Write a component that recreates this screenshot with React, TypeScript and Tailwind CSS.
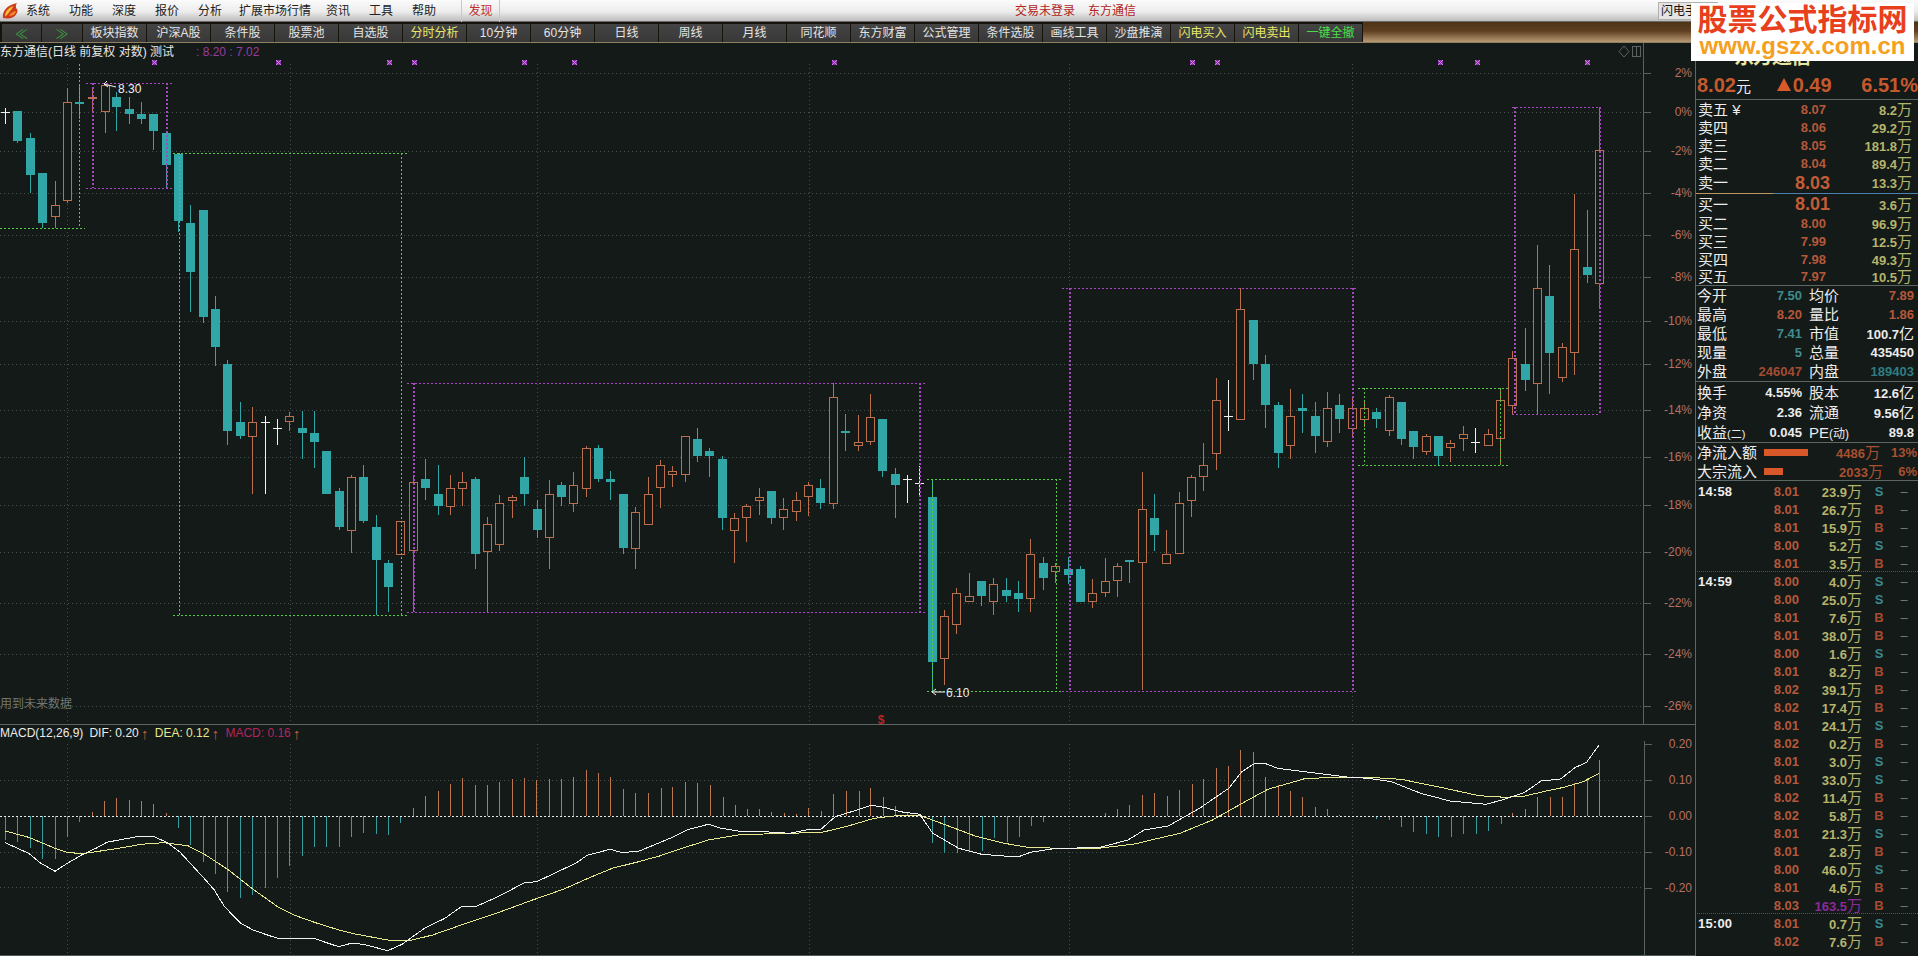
import React from 'react';

type Kind = 'u' | 'd' | 'w';
const candles: [number, number, number, number, number, Kind][] = [
  [5,108,112,112,124,'w'],[17,111,111,141,143,'d'],[30,133,138,175,193,'d'],[42,173,173,223,228,'d'],[55,181,205,217,228,'u'],
  [67,88,102,201,203,'u'],[79,85,102,104,119,'d'],[92,88,97,99,112,'u'],[105,85,85,112,133,'u'],[116,92,97,107,131,'d'],
  [129,97,109,114,124,'d'],[141,102,114,119,124,'d'],[153,114,114,131,150,'d'],[166,133,133,165,188,'d'],[178,154,154,221,232,'d'],
  [190,205,223,272,312,'d'],[203,210,210,317,323,'d'],[215,296,309,347,366,'d'],[227,360,364,431,445,'d'],[240,402,422,436,439,'d'],
  [252,407,422,437,494,'u'],[265,416,422,422,494,'w'],[277,419,428,428,445,'w'],[289,412,416,422,431,'u'],[302,411,428,433,459,'d'],
  [314,411,433,442,468,'d'],[326,451,451,494,494,'d'],[339,488,491,527,530,'d'],[351,475,477,531,553,'u'],[363,465,477,521,523,'d'],
  [376,515,527,560,615,'d'],[388,560,563,587,612,'d'],[400,521,521,555,555,'u'],[413,475,482,551,612,'u'],[425,459,479,488,500,'d'],
  [438,465,494,506,515,'d'],[450,475,488,507,515,'u'],[462,472,482,489,506,'u'],[475,477,479,554,569,'d'],[487,517,524,552,612,'u'],
  [499,495,503,545,551,'u'],[512,495,497,501,518,'u'],[524,457,477,494,506,'d'],[537,500,509,530,538,'d'],[549,480,494,538,569,'u'],
  [561,482,485,497,506,'d'],[573,472,485,504,512,'u'],[586,446,448,489,497,'u'],[598,445,448,479,482,'d'],[610,471,479,482,500,'d'],
  [623,494,494,548,554,'d'],[635,507,512,549,569,'u'],[648,477,494,525,525,'u'],[660,460,465,488,508,'u'],[672,466,471,475,487,'u'],
  [685,436,436,475,482,'u'],[697,428,439,456,462,'d'],[709,448,451,456,477,'d'],[722,456,459,518,530,'d'],[734,513,518,531,563,'u'],
  [746,504,506,518,542,'u'],[759,488,497,501,515,'u'],[771,491,491,518,524,'d'],[783,498,509,518,530,'u'],[796,492,500,512,521,'u'],
  [808,482,485,497,516,'u'],[820,479,488,503,509,'d'],[833,383,397,504,509,'u'],[845,414,431,433,451,'d'],[858,415,442,446,451,'u'],
  [870,394,417,442,445,'u'],[882,419,419,471,477,'d'],[895,468,474,485,518,'d'],[907,475,479,479,503,'w'],[919,466,483,483,497,'w'],
  [932,479,497,662,692,'d'],[944,610,616,659,685,'u'],[956,588,593,625,634,'u'],[969,573,596,602,602,'u'],[981,581,581,596,606,'d'],
  [993,578,584,602,615,'u'],[1006,578,590,596,602,'d'],[1018,581,593,599,612,'d'],[1030,539,554,599,612,'u'],[1043,557,563,578,590,'d'],
  [1055,563,566,572,583,'u'],[1068,557,569,575,584,'d'],[1080,566,569,602,602,'d'],[1092,579,593,602,608,'u'],[1105,558,581,593,597,'u'],
  [1117,563,566,581,597,'u'],[1129,560,560,562,583,'d'],[1142,472,509,563,690,'u'],[1154,494,518,535,551,'d'],[1166,530,554,564,564,'u'],
  [1179,492,503,554,554,'u'],[1191,475,477,501,517,'u'],[1203,443,465,477,491,'u'],[1216,378,400,454,470,'u'],[1228,380,416,416,431,'w'],
  [1240,288,309,420,420,'u'],[1253,320,320,364,380,'d'],[1265,355,364,405,428,'d'],[1278,402,405,453,468,'d'],[1290,389,416,446,459,'u'],
  [1302,394,408,411,433,'d'],[1315,402,416,436,453,'d'],[1327,392,408,442,447,'u'],[1339,394,405,419,433,'d'],[1352,398,408,429,437,'u'],
  [1364,400,408,420,427,'u'],[1376,408,412,419,428,'d'],[1389,395,397,431,436,'u'],[1401,402,402,439,445,'d'],[1413,431,431,447,459,'d'],
  [1426,434,436,452,455,'u'],[1438,436,436,456,465,'d'],[1450,440,443,448,462,'u'],[1463,426,434,439,451,'u'],[1475,428,442,442,453,'w'],
  [1488,429,434,446,446,'u'],[1500,389,400,439,465,'u'],[1512,351,358,406,414,'u'],[1525,328,364,380,391,'d'],[1537,245,288,384,414,'u'],
  [1549,265,296,353,394,'d'],[1562,343,347,378,382,'u'],[1574,194,249,353,375,'u'],[1587,210,267,275,283,'d'],[1599,107,150,284,309,'u'],
];

const green = '#58c848';
const purple = '#a848c0';
const boxes: [string, number, number, number, number, number, number][] = [
  [purple,92,166,83,188,86,172],[green,179,401,153,615,173,407],[purple,413,919,383,612,407,927],
  [green,932,1056,479,691,927,1062],[purple,1069,1352,288,691,1062,1358],[green,1364,1500,388,465,1358,1508],[purple,1514,1599,107,414,1512,1600],
];

const pctLabels: [string, number][] = [['2%',73],['0%',112],['-2%',151],['-4%',193],['-6%',235],['-8%',277],['-10%',321],['-12%',364],['-14%',410],['-16%',457],['-18%',505],['-20%',552],['-22%',603],['-24%',654],['-26%',706]];
const vGrid = [67,290,537,809,1069,1352];
const marks = [154,278,389,414,524,574,834,1192,1217,1440,1477,1587];

const hist: [number, number][] = [
  [5,840],[17,842],[30,848],[42,859],[55,859],[67,837],[79,822],[92,812],[104,801],[116,798],[129,800],[141,801],[153,804],[166,813],
  [178,828],[190,845],[203,862],[215,874],[227,892],[240,898],[252,895],[265,888],[277,878],[289,866],[302,856],[314,847],[326,847],[339,847],[351,837],[363,833],[376,834],[388,835],[400,823],
  [413,808],[425,796],[438,791],[450,784],[462,778],[475,785],[487,785],[499,782],[512,779],[524,778],[536,780],[549,779],[561,779],[573,777],[586,770],[598,773],[610,777],[623,789],[635,793],
  [648,793],[661,788],[672,787],[685,782],[697,783],[710,785],[723,797],[735,805],[747,809],[759,809],[771,812],[784,813],[796,814],[808,808],[821,811],[833,794],[846,791],[859,791],[870,788],[883,797],[895,806],[907,812],
  [932,843],[944,853],[957,853],[969,852],[982,851],[994,838],[1007,842],[1019,837],[1031,826],[1043,822],
  [1105,813],[1117,809],[1129,805],[1142,795],[1154,793],[1167,796],[1179,790],[1192,784],[1203,779],[1216,768],[1228,766],[1240,750],[1253,752],[1265,777],[1278,785],[1290,791],[1302,797],[1315,807],[1327,809],[1339,815],
  [1376,819],[1389,820],[1401,827],[1413,832],[1426,834],[1438,837],[1451,837],[1463,834],[1476,834],[1488,831],[1501,824],
  [1512,813],[1525,809],[1537,797],[1550,797],[1562,797],[1574,783],[1587,778],[1599,760],
];

const whiteA = [[13,488],[70,520],[100,550],[135,574],[165,550],[200,525],[235,505],[262,487],[300,478],[345,468],[380,471],[410,488],[440,515],[470,555],[500,595],[525,630],[550,680],[590,730],[620,750],[650,763],[680,775],[725,775],[770,775],[800,788],[830,800],[860,790],[890,793],[950,812],[985,793],[1040,745],[1090,715],[1130,680],[1165,680],[1220,650],[1285,608],[1315,605],[1410,550],[1440,525],[1495,508],[1525,518],[1565,513]];
const yellowA = [[13,453],[70,472],[105,490],[135,505],[165,517],[200,521],[235,515],[300,503],[345,493],[400,488],[460,497],[500,522],[560,570],[620,628],[680,680],[720,705],[770,727],[830,750],[870,762],[950,780],[1000,783],[1060,765],[1130,735],[1220,698],[1300,662],[1380,628],[1450,590],[1500,565],[1565,545]];
const whiteB = [[0,452],[30,428],[50,412],[75,388],[105,373],[125,385],[150,393],[190,395],[230,400],[260,388],[278,388],[300,350],[325,335],[355,316],[375,322],[400,335],[430,343],[450,400],[490,445],[525,463],[560,468],[585,468],[600,457],[640,445],[705,443],[750,420],[775,390],[812,378],[860,325],[905,265],[925,215],[945,190],[960,190],[980,205],[1010,212],[1050,222],[1090,232],[1120,235],[1155,245],[1200,280],[1245,303],[1300,313],[1325,300],[1360,277],[1385,243],[1415,237],[1437,203],[1455,187],[1474,135]];
const yellowB = [[0,484],[30,468],[60,448],[105,420],[150,405],[190,402],[230,400],[280,397],[320,378],[360,355],[400,346],[430,346],[470,375],[515,408],[560,430],[600,443],[660,445],[705,445],[760,432],[790,418],[830,400],[880,360],[930,305],[965,268],[1020,237],[1060,232],[1120,232],[1170,238],[1230,262],[1290,287],[1330,292],[1360,288],[1395,272],[1420,262],[1450,245],[1474,220]];
const toLine = (a: number[][], b: number[][]) =>
  [...a.map(([x, y]) => `${(x / 2.45).toFixed(1)},${(680 + y / 3).toFixed(1)}`), ...b.map(([x, y]) => `${(640 + x / 1.537).toFixed(1)},${(700 + y / 3).toFixed(1)}`)].join(' ');

const menus: [string, string][] = [['系统','w-[43px]'],['功能','w-[43px]'],['深度','w-[43px]'],['报价','w-[43px]'],['分析','w-[41px]'],['扩展市场行情','w-[87px]'],['资讯','w-[43px]'],['工具','w-[43px]'],['帮助','w-[49px]']];
const tools: [string, string][] = [['板块指数','text-[#e4e4e4]'],['沪深A股','text-[#e4e4e4]'],['条件股','text-[#e4e4e4]'],['股票池','text-[#e4e4e4]'],['自选股','text-[#e4e4e4]'],['分时分析','text-[#e8e868]'],['10分钟','text-[#e4e4e4]'],['60分钟','text-[#e4e4e4]'],['日线','text-[#e4e4e4]'],['周线','text-[#e4e4e4]'],['月线','text-[#e4e4e4]'],['同花顺','text-[#e4e4e4]'],['东方财富','text-[#e4e4e4]'],['公式管理','text-[#e4e4e4]'],['条件选股','text-[#e4e4e4]'],['画线工具','text-[#e4e4e4]'],['沙盘推演','text-[#e4e4e4]'],['闪电买入','text-[#e8e868]'],['闪电卖出','text-[#e8e868]'],['一键全撤','text-[#48e048]']];

const red = 'text-[#b4583a]';
const teal = 'text-[#3e8c8e]';
const qty = 'text-[#b4b46c]';

function Book({ label, price, vol, big, h }: { label: React.ReactNode; price: string; vol: string; big?: boolean; h: string }) {
  return (
    <div className={`grid grid-cols-[60px_68px_86px] items-center pl-[2px] ${h}`}>
      <span className="text-[15px] leading-none text-[#ececec] whitespace-nowrap">{label}</span>
      {big ? (
        <span className="justify-self-end -mr-[4px] text-[18px] font-bold text-[#c05c36] leading-none">{price}</span>
      ) : (
        <span className={`justify-self-end text-[13px] leading-none font-bold ${red}`}>{price}</span>
      )}
      <span className={`justify-self-end text-[13px] leading-none font-bold ${qty}`}>
        {vol}
        <span className="text-[15px] font-normal">万</span>
      </span>
    </div>
  );
}

function Val({ v, unit, color = 'text-[#ececec]' }: { v: string; unit?: string; color?: string }) {
  return (
    <span className={`w-[72px] text-right text-[13px] leading-none font-bold whitespace-nowrap ${color}`}>
      {v}
      {unit && <span className="text-[15px] font-normal">{unit}</span>}
    </span>
  );
}

function Stat({ a, av, b, bv, h }: { a: React.ReactNode; av: React.ReactNode; b: React.ReactNode; bv: React.ReactNode; h: string }) {
  return (
    <div className={`flex items-center pl-[1px] ${h}`}>
      <span className="w-[33px] text-[15px] leading-none text-[#ececec] whitespace-nowrap">{a}</span>
      {av}
      <span className="w-[33px] ml-[7px] text-[15px] leading-none text-[#ececec] whitespace-nowrap">{b}</span>
      {bv}
    </div>
  );
}

const ticks: [string, string, string, 'S' | 'B'][] = [
  ['14:58','8.01','23.9','S'],['','8.01','26.7','B'],['','8.01','15.9','B'],['','8.00','5.2','S'],['','8.01','3.5','B'],
  ['14:59','8.00','4.0','S'],['','8.00','25.0','S'],['','8.01','7.6','B'],['','8.01','38.0','B'],['','8.00','1.6','S'],
  ['','8.01','8.2','B'],['','8.02','39.1','B'],['','8.02','17.4','B'],['','8.01','24.1','S'],['','8.02','0.2','B'],
  ['','8.01','3.0','S'],['','8.01','33.0','S'],['','8.02','11.4','B'],['','8.02','5.8','B'],['','8.01','21.3','S'],
  ['','8.01','2.8','B'],['','8.00','46.0','S'],['','8.01','4.6','B'],['','8.03','163.5','B'],['15:00','8.01','0.7','S'],
  ['','8.02','7.6','B'],
];

const Up = () => <span className="inline-block w-[12px] mr-[4px] text-center text-[15px] leading-none text-[#c8643c]">↑</span>;

export default function App() {
  return (
    <div className="relative w-[1918px] h-[956px] overflow-hidden flex flex-col bg-[#141a18] font-['Liberation_Sans','Noto_Sans_CJK_SC',sans-serif] text-[12px]">
      {/* menu bar */}
      <div className="h-[22px] flex items-center bg-[linear-gradient(to_bottom,#fbfbfb,#ececec_55%,#bdbdbd)] border-b border-[#6a6a6a] text-[#222]">
        <svg width="16" height="16" viewBox="0 0 16 16" className="ml-[2px] mr-[8px] shrink-0">
          <path d="M1 15 C0 8 5 2 15 0 C13 3 14 5 15.500 7 C15.500 12 11 16 5 15.500 C3.500 15.500 2 15.300 1 15Z" fill="#cf3a1a" />
          <path d="M3 13.500 C3 9 6 5 11.500 3 C10 6 9 7 7 9.500 C6 11 4.500 12.500 3 13.500Z" fill="#f6bc3c" />
          <path d="M7 12.500 C9 10 11 8.500 14 8 C13.500 11 11 13.500 7 12.500Z" fill="#f08a2c" />
        </svg>
        {menus.map(([m, w]) => (
          <span key={m} className={`${w} shrink-0 whitespace-nowrap`}>{m}</span>
        ))}
        <span className="w-[39px] h-[22px] shrink-0 flex items-center justify-center border-x border-[#c8c8c8] text-[#c03030]">发现</span>
        <span className="ml-[515px] w-[73px] shrink-0 whitespace-nowrap text-[#b02424]">交易未登录</span>
        <span className="w-[60px] shrink-0 whitespace-nowrap text-[#b02424]">东方通信</span>
        <span className="ml-[510px] w-[60px] h-[18px] shrink-0 flex items-center pl-[2px] bg-[#e4e4e4] border border-[#b0b0b0] whitespace-nowrap text-[#111]">闪电手</span>
      </div>

      {/* toolbar */}
      <div className="h-[21px] flex bg-[#16120c] border-b border-[#8f8060]">
        <div className="flex pt-[2px] pl-[2px] shrink-0">
          <span className="w-[39px] h-[18px] mr-px flex items-center justify-center bg-[linear-gradient(to_bottom,#404040,#353535)] text-[#3f9f3f] text-[13px] leading-none">≪</span>
          <span className="w-[40px] h-[18px] mr-px flex items-center justify-center bg-[linear-gradient(to_bottom,#404040,#353535)] text-[#3f9f3f] text-[13px] leading-none">≫</span>
          {tools.map(([t, c]) => (
            <span key={t} className={`w-[63px] h-[18px] mr-px flex items-center justify-center whitespace-nowrap bg-[linear-gradient(to_bottom,#444444,#383838)] ${c}`}>{t}</span>
          ))}
        </div>
        <div className="flex-1 bg-[linear-gradient(to_bottom,#4e3317,#5e3f20_45%,#b99a74)]" />
      </div>

      {/* body */}
      <div className="flex-1 flex min-h-0">
        <div className="w-[1695px] shrink-0 flex flex-col">
          <div className="h-[16px] w-[1644px] flex border-r border-[#5a625f]">
            <span className="text-[#e8e8e8] leading-[19px] whitespace-nowrap">东方通信(日线 前复权 对数) 测试</span>
            <span className="ml-[22px] text-[#9a3ca0] leading-[19px] whitespace-nowrap">: 8.20 : 7.02</span>
            <svg width="24" height="14" viewBox="0 0 24 14" className="ml-auto mr-[1px] mt-[2px]">
              <path d="M6 1 L11 6.500 L6 12 L1 6.500 Z" fill="none" stroke="#5c6461" />
              <rect x="14.500" y="1.500" width="8" height="10" fill="none" stroke="#5c6461" />
              <line x1="18.500" y1="1.500" x2="18.500" y2="11.500" stroke="#5c6461" />
            </svg>
          </div>

          <svg width="1695" height="665" viewBox="0 59 1695 665" className="block shrink-0" shapeRendering="crispEdges">
            {pctLabels.map(([l, y]) => (
              <g key={l}>
                <line x1="0" x2="1643" y1={y + 0.5} y2={y + 0.5} stroke="#474f4c" strokeDasharray="1 3" />
                <line x1="1644" x2="1651" y1={y + 0.5} y2={y + 0.5} stroke="#5a625f" />
                <text x="1692" y={y + 4} textAnchor="end" fontSize="12" fill="#b87062" shapeRendering="auto">{l}</text>
              </g>
            ))}
            {vGrid.map((x) => (
              <line key={x} x1={x + 0.5} x2={x + 0.5} y1="64" y2="724" stroke="#474f4c" strokeDasharray="1 3" />
            ))}
            <line x1="1643.500" x2="1643.500" y1="59" y2="724" stroke="#5a625f" />
            {marks.map((x) => (
              <g key={x}>
                <rect x={x - 2} y="60" width="5" height="5" fill="#8a2ea8" />
                <path d={`M${x - 2} 60 l5 5 M${x + 3} 60 l-5 5`} stroke="#d080e0" strokeWidth="1" fill="none" />
              </g>
            ))}
            {candles.map(([x, hi, top, bot, lo, k], i) => {
              const px = x + 0.5;
              if (k === 'w')
                return (
                  <g key={i} stroke="#f2f2f2">
                    <line x1={px} x2={px} y1={hi} y2={lo} />
                    <line x1={x - 4} x2={x + 5} y1={top + 0.5} y2={top + 0.5} />
                  </g>
                );
              const c = k === 'u' ? '#bc6f4c' : '#30a6a6';
              return (
                <g key={i} stroke={c}>
                  <line x1={px} x2={px} y1={hi} y2={top} />
                  <line x1={px} x2={px} y1={bot} y2={lo} />
                  {k === 'u' ? (
                    <rect x={x - 4 + 0.5} y={top + 0.5} width="8" height={Math.max(bot - top - 1, 1)} fill="#141a18" />
                  ) : (
                    <rect x={x - 4} y={top} width="9" height={Math.max(bot - top, 2)} fill={c} stroke="none" />
                  )}
                </g>
              );
            })}
            <g fill="none" strokeDasharray="2 2">
              <line x1="0" x2="85" y1="228.500" y2="228.500" stroke={green} />
              <line x1="79.500" x2="79.500" y1="64" y2="228" stroke={green} />
              {boxes.map(([c, x1, x2, y1, y2, h1, h2], i) => (
                <g key={i} stroke={c}>
                  <line x1={h1} x2={h2} y1={y1 + 0.5} y2={y1 + 0.5} />
                  <line x1={h1} x2={h2} y1={y2 + 0.5} y2={y2 + 0.5} />
                  <line x1={x1 + 0.5} x2={x1 + 0.5} y1={y1} y2={y2} strokeWidth={c === purple ? 2 : 1} />
                  <line x1={x2 + 0.5} x2={x2 + 0.5} y1={y1} y2={y2} strokeWidth={c === purple ? 2 : 1} />
                </g>
              ))}
            </g>
            <g shapeRendering="auto">
              <path d="M108 87 L104 84 L107 81 M104 84 L116 87" fill="none" stroke="#f0f0f0" />
              <text x="118" y="93" fontSize="12" fill="#f0f0f0">8.30</text>
              <path d="M936 689 L932 692 L936 695 M932 692 L945 692" fill="none" stroke="#f0f0f0" />
              <text x="946" y="697" fontSize="12" fill="#e8e8e8">6.10</text>
              <text x="0" y="708" fontSize="12" fill="#6f7673">用到未来数据</text>
              <text x="881" y="724" textAnchor="middle" fontSize="12" fontWeight="bold" fill="#c02020">$</text>
            </g>
          </svg>

          <div className="h-[17px] shrink-0 border-t border-[#5c6663] flex items-center whitespace-nowrap text-[12px]">
            <span className="text-[#ececec] mr-[6px]">MACD(12,26,9)</span>
            <span className="text-[#ececec]">DIF: 0.20</span><Up />
            <span className="text-[#e6e690]">DEA: 0.12</span><Up />
            <span className="text-[#b4245e]">MACD: 0.16</span><Up />
          </div>

          <svg width="1695" height="215" viewBox="0 741 1695 215" className="block shrink-0 overflow-visible" shapeRendering="crispEdges">
            {[780, 852, 887].map((y) => (
              <line key={y} x1="0" x2="1644" y1={y + 0.5} y2={y + 0.5} stroke="#474f4c" strokeDasharray="1 3" />
            ))}
            {vGrid.map((x) => (
              <line key={x} x1={x + 0.5} x2={x + 0.5} y1="744" y2="955" stroke="#474f4c" strokeDasharray="1 3" />
            ))}
            {hist.map(([x, y]) => (
              <line key={x} x1={x + 0.5} x2={x + 0.5} y1="816" y2={y} stroke={y < 816 ? '#bc7650' : '#389c9e'} />
            ))}
            <line x1="0" x2="1644" y1="816.500" y2="816.500" stroke="#e8e8e8" strokeDasharray="2 2" />
            <polyline points={toLine(yellowA, yellowB)} fill="none" stroke="#e8e890" strokeWidth="1" />
            <polyline points={toLine(whiteA, whiteB)} fill="none" stroke="#f2f2f2" strokeWidth="1" />
            <line x1="1644.500" x2="1644.500" y1="741" y2="955" stroke="#5a625f" />
            {([['0.20',744],['0.10',780],['0.00',816],['-0.10',852],['-0.20',888]] as [string, number][]).map(([l, y]) => (
              <g key={l}>
                <line x1="1645" x2="1652" y1={y + 0.5} y2={y + 0.5} stroke="#5a625f" />
                <text x="1692" y={y + 4} textAnchor="end" fontSize="12" fill="#b87062" shapeRendering="auto">{l}</text>
              </g>
            ))}
            <line x1="0" x2="1695" y1="955.500" y2="955.500" stroke="#4f5c5a" />
          </svg>
        </div>

        {/* right panel */}
        <div className="w-[223px] shrink-0 border-l border-[#5c6663] flex flex-col overflow-hidden">
          <div className="h-[27px] shrink-0 flex items-center pl-[24px]">
            <span className="w-[6px] h-[6px] bg-[#c05c36] mr-[8px] shrink-0" />
            <span className="text-[20px] leading-none font-bold text-[#e6e6a0] tracking-[-1px] whitespace-nowrap mr-[18px]">东方通信</span>
            <span className="text-[13px] leading-none text-[#eeeeee]">600776</span>
          </div>
          <div className="h-[30px] shrink-0 flex items-center pl-[1px] border-b border-[#5c6663] font-bold text-[20px] text-[#c4592e] leading-none whitespace-nowrap">
            <span className="w-[80px]">8.02<span className="text-[15px] font-normal text-[#ececec]">元</span></span>
            <span className="w-[85px] flex items-center">
              <svg width="14" height="13" viewBox="0 0 14 13" className="mr-[2px] shrink-0"><path d="M7 0 L14 13 L0 13 Z" fill="#d85a2a" /></svg>
              0.49
            </span>
            <span>6.51%</span>
          </div>

          <Book h="h-[18px]" label={<>卖五 <span>¥</span></>} price="8.07" vol="8.2" />
          <Book h="h-[18px]" label="卖四" price="8.06" vol="29.2" />
          <Book h="h-[18px]" label="卖三" price="8.05" vol="181.8" />
          <Book h="h-[18px]" label="卖二" price="8.04" vol="89.4" />
          <Book h="h-[21px]" label="卖一" price="8.03" vol="13.3" big />
          <div className="h-px shrink-0 flex">
            <div className="w-[77px] bg-[#b89860]" />
            <div className="flex-1 bg-[#4a80b0]" />
          </div>
          <Book h="h-[20px]" label="买一" price="8.01" vol="3.6" big />
          <Book h="h-[18px]" label="买二" price="8.00" vol="96.9" />
          <Book h="h-[18px]" label="买三" price="7.99" vol="12.5" />
          <Book h="h-[18px]" label="买四" price="7.98" vol="49.3" />
          <Book h="h-[17px]" label="买五" price="7.97" vol="10.5" />

          <div className="border-t border-[#5c6663] shrink-0">
            <Stat h="h-[19px]" a="今开" av={<Val v="7.50" color={teal} />} b="均价" bv={<Val v="7.89" color={red} />} />
            <Stat h="h-[19px]" a="最高" av={<Val v="8.20" color={red} />} b="量比" bv={<Val v="1.86" color={red} />} />
            <Stat h="h-[19px]" a="最低" av={<Val v="7.41" color={teal} />} b="市值" bv={<Val v="100.7" unit="亿" />} />
            <Stat h="h-[19px]" a="现量" av={<Val v="5" color={teal} />} b="总量" bv={<Val v="435450" />} />
            <Stat h="h-[19px]" a="外盘" av={<Val v="246047" color="text-[#a24c32]" />} b="内盘" bv={<Val v="189403" color="text-[#2f7d82]" />} />
          </div>
          <div className="border-t border-[#5c6663] shrink-0">
            <Stat h="h-[20px]" a="换手" av={<Val v="4.55%" />} b="股本" bv={<Val v="12.6" unit="亿" />} />
            <Stat h="h-[20px]" a="净资" av={<Val v="2.36" />} b="流通" bv={<Val v="9.56" unit="亿" />} />
            <Stat h="h-[20px]" a={<>收益<span className="text-[11px]">(二)</span></>} av={<Val v="0.045" />} b={<>PE<span className="text-[12px]">(动)</span></>} bv={<Val v="89.8" />} />
          </div>
          <div className="border-t border-[#5c6663] shrink-0">
            <div className="h-[19px] flex items-center pl-[1px]">
              <span className="w-[67px] text-[15px] leading-none text-[#ececec] whitespace-nowrap">净流入额</span>
              <span className="w-[44px] h-[7px] bg-[#d8582a]" />
              <span className="w-[72px] text-right text-[13px] leading-none font-bold text-[#a85030]">4486<span className="text-[15px] font-normal">万</span></span>
              <span className="w-[37px] text-right text-[13px] leading-none font-bold text-[#a85030]">13%</span>
            </div>
            <div className="h-[18px] flex items-center pl-[1px]">
              <span className="w-[67px] text-[15px] leading-none text-[#ececec] whitespace-nowrap">大宗流入</span>
              <span className="w-[19px] h-[7px] bg-[#d8582a]" />
              <span className="w-[100px] text-right text-[13px] leading-none font-bold text-[#a85030]">2033<span className="text-[15px] font-normal">万</span></span>
              <span className="w-[34px] text-right text-[13px] leading-none font-bold text-[#a85030]">6%</span>
            </div>
          </div>
          <div className="border-t border-[#5c6663] pt-[1px] shrink-0">
            {ticks.map(([t, p, v, s], i) => (
              <div key={i} className={`h-[18px] grid grid-cols-[50px_51px_63px_34px_16px] items-center pl-[2px] font-bold text-[13px] leading-none ${t && i > 0 ? 'relative' : ''}`}>
                {t && i > 0 && <span className="absolute left-[1px] right-0 top-[-1px] border-t border-dotted border-[#4d5451]" />}
                <span className="text-[#eeeeee] tracking-[0.2px]">{t}</span>
                <span className={`text-right ${red}`}>{p}</span>
                <span className={`text-right whitespace-nowrap ${v === '163.5' ? 'text-[#8a2a9a]' : qty}`}>
                  {v}
                  <span className="text-[15px] font-normal">万</span>
                </span>
                <span className={`text-center ${s === 'S' ? 'text-[#3a8a90]' : 'text-[#a84a30]'}`}>{s}</span>
                <span className="text-center font-normal text-[#6f7f76]">–</span>
              </div>
            ))}
          </div>
        </div>
      </div>

      {/* watermark */}
      <div className="absolute left-[1691px] top-[3px] w-[223px] h-[58px] bg-white flex flex-col items-center overflow-hidden">
        <span className="text-[30px] leading-[33px] font-bold text-[#e8401c] whitespace-nowrap">股票公式指标网</span>
        <span className="text-[24px] leading-[20px] font-bold text-[#f5a020] whitespace-nowrap">www.gszx.com.cn</span>
      </div>
    </div>
  );
}
